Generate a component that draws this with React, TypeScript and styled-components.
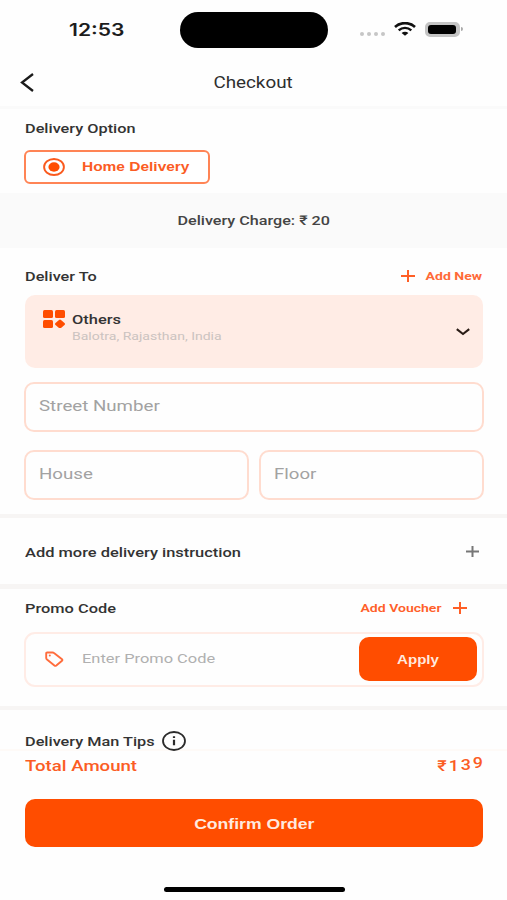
import React from 'react';
import styled, { createGlobalStyle } from 'styled-components';

const ORANGE = '#ff4d00';

const GlobalStyle = createGlobalStyle`
  *, *::before, *::after { box-sizing: border-box; }
  body { margin: 0; background: #fefefe; font-family: Roboto, "Liberation Sans", sans-serif; }
  svg { display: block; flex: none; }
`;

const Screen = styled.main`
  width: 507px;
  height: 900px;
  overflow: hidden;
  display: flex;
  flex-direction: column;
  background: #fefefe;
`;

/* The interface uses an extended cut of the face, so every label is widened. */
const Text = styled.span<{
  $size?: number;
  $weight?: number;
  $color?: string;
  $stretch?: number;
  $origin?: 'left' | 'center' | 'right';
}>`
  display: inline-block;
  white-space: nowrap;
  font-size: ${p => p.$size ?? 13.5}px;
  font-weight: ${p => p.$weight ?? 500};
  line-height: 18px;
  color: ${p => p.$color ?? '#333'};
  transform: scaleX(${p => p.$stretch ?? 1.206});
  transform-origin: ${p => p.$origin ?? 'left'} center;
`;

const Clock = styled(Text)`
  font-family: Inter, sans-serif;
`;

const StatusBar = styled.header`
  height: 60px;
  display: grid;
  grid-template-columns: 180px 148px 1fr;
  align-items: center;
`;
const ClockCell = styled.div`
  padding-left: 69px;
`;
const Island = styled.div`
  height: 36px;
  border-radius: 18px;
  background: #000;
`;
const StatusIcons = styled.div`
  display: flex;
  align-items: center;
  padding: 0 0 2px 32px;
`;
const Dots = styled.div`
  display: flex;
  gap: 3px;
  padding-top: 10px;
  margin-right: 9px;
`;
const Dot = styled.i`
  width: 4px;
  height: 4px;
  border-radius: 50%;
  background: #c6c6c6;
`;
const Battery = styled.div`
  width: 35px;
  height: 15px;
  margin-left: 9px;
  padding: 1px;
  border-radius: 5px;
  border: 2px solid #c4c4c4;
  background: #c4c4c4;
`;
const Charge = styled.div`
  width: 28px;
  height: 9px;
  border-radius: 3px;
  background: #000;
`;
const BatteryTip = styled.i`
  width: 2px;
  height: 4px;
  margin-left: 1px;
  border-radius: 0 2px 2px 0;
  background: #aaa;
`;

const TitleBar = styled.nav`
  height: 49px;
  padding: 0 20px 1px;
  display: grid;
  grid-template-columns: 40px 1fr 40px;
  align-items: center;
  justify-items: center;
  border-bottom: 3px solid #fafafa;
`;
const BackButton = styled.button`
  justify-self: start;
  padding: 0;
  border: 0;
  background: none;
`;

const OptionSection = styled.section`
  height: 84px;
  padding: 10px 24px 0;
  display: flex;
  flex-direction: column;
  gap: 13px;
`;
const OptionTitle = styled.div`
  height: 18px;
  padding-left: 1px;
  display: flex;
`;
const OptionButton = styled.button`
  width: 186px;
  height: 34px;
  padding: 0 0 0 17px;
  display: flex;
  align-items: center;
  gap: 17px;
  border: 2px solid #ff8455;
  border-radius: 6px;
  background: #fff;
`;

const ChargeBand = styled.section`
  height: 55px;
  padding-bottom: 2px;
  display: flex;
  align-items: center;
  justify-content: center;
  background: #fafafa;
`;

const AddressSection = styled.section`
  height: 266px;
  padding: 19px 23px 0 24px;
  display: flex;
  flex-direction: column;
`;
const SectionHead = styled.div`
  height: 18px;
  padding: 0 2px 0 1px;
  display: flex;
  align-items: center;
  justify-content: space-between;
`;
const AddLink = styled.a`
  display: flex;
  align-items: center;
  gap: 20px;
`;
const AddressCard = styled.div`
  height: 73px;
  margin: 10px 1px 14px;
  padding: 15px 13px 0 18px;
  display: grid;
  grid-template-columns: 29px 1fr 14px;
  border-radius: 10px;
  background: #ffece5;
`;
const AddressLines = styled.div`
  display: flex;
  flex-direction: column;
  align-items: flex-start;
`;
const AddressDetail = styled(Text)`
  line-height: 16px;
`;
const Chevron = styled.div`
  padding-top: 18px;
`;
const FieldGrid = styled.div`
  display: grid;
  grid-template-columns: 225px 225px;
  column-gap: 10px;
  row-gap: 18px;
`;
const Field = styled.div<{ $wide?: boolean }>`
  height: 50px;
  padding: 0 0 3px 13px;
  display: flex;
  align-items: center;
  grid-column: ${p => (p.$wide ? 'span 2' : 'auto')};
  border: 2px solid #ffdccf;
  border-radius: 10px;
`;

const Divider = styled.hr<{ $height: number }>`
  flex: none;
  width: 100%;
  height: ${p => p.$height}px;
  margin: 0;
  border: 0;
  background: #f7f5f4;
`;

const InstructionRow = styled.section`
  height: 66px;
  padding: 1px 28px 0 25px;
  display: flex;
  align-items: center;
  justify-content: space-between;
`;

const PromoSection = styled.section`
  height: 117px;
  padding: 10px 23px 0 24px;
`;
const PromoHead = styled(SectionHead)`
  padding-right: 17px;
`;
const VoucherLink = styled(AddLink)`
  gap: 12px;
`;
const PromoBox = styled.div`
  height: 55px;
  margin-top: 15px;
  padding: 0 5px 0 18px;
  display: flex;
  align-items: center;
  border: 2px solid #ffece6;
  border-radius: 11px;
`;
const PromoPlaceholder = styled.div`
  flex: 1;
  padding: 0 0 3px 18px;
  display: flex;
`;
const ApplyButton = styled.button`
  width: 118px;
  height: 44px;
  margin-bottom: 1px;
  padding: 2px 0 0;
  border: 0;
  border-radius: 10px;
  background: ${ORANGE};
`;

const TipsRow = styled.section`
  position: relative;
  z-index: 1;
  height: 39px;
  padding: 22px 25px 0;
  display: flex;
  align-items: center;
  gap: 30px;
`;
const Footer = styled.footer`
  height: 151px;
  padding: 6px 24px 0 25px;
  display: flex;
  flex-direction: column;
  align-items: center;
  border-top: 2px solid #fefaf7;
`;
const TotalRow = styled.div`
  width: 100%;
  height: 18px;
  display: flex;
  justify-content: space-between;
`;
const Price = styled.div`
  display: flex;
  gap: 2px;
  padding-right: 1px;
`;
const Digit = styled(Text)<{ $lift: number }>`
  width: 10px;
  text-align: center;
  margin-top: ${p => -p.$lift}px;
`;
const ConfirmButton = styled.button`
  width: 458px;
  height: 48px;
  margin-top: 24px;
  padding: 2px 0 0;
  border: 0;
  border-radius: 10px;
  background: ${ORANGE};
`;
const HomeIndicator = styled.div`
  width: 181px;
  height: 5px;
  margin-top: 40px;
  border-radius: 3px;
  background: #000;
`;

const Plus = ({ color = '#ff5f26', w = 14, h = 12, stroke = 2 }) => (
  <svg width={w} height={h} viewBox={`0 0 ${w} ${h}`} stroke={color} strokeWidth={stroke}>
    <path d={`M0 ${h / 2}H${w}M${w / 2} 0V${h}`} />
  </svg>
);

const price: [string, number][] = [['1', 0], ['3', 1], ['9', 3]];

export default function App() {
  return (
    <Screen>
      <GlobalStyle />
      <StatusBar>
        <ClockCell>
          <Clock $size={17} $weight={600} $color="#1c1c1c" $stretch={1.24}>12:53</Clock>
        </ClockCell>
        <Island />
        <StatusIcons>
          <Dots><Dot /><Dot /><Dot /><Dot /></Dots>
          <svg width="22" height="14" viewBox="0 0 22 14" fill="none" stroke="#111">
            <path d="M1 5C6.5-.2 15.500-.2 21 5" strokeWidth="2.600" />
            <path d="M4.700 8.300C8.300 5 13.700 5 17.300 8.300" strokeWidth="2.400" />
            <path d="M11 13.700L7.600 11C9.500 9.300 12.500 9.300 14.400 11Z" fill="#111" stroke="none" />
          </svg>
          <Battery><Charge /></Battery>
          <BatteryTip />
        </StatusIcons>
      </StatusBar>

      <TitleBar>
        <BackButton aria-label="Back">
          <svg width="14" height="19" viewBox="0 0 14 19" fill="none" stroke="#1b1b1b" strokeWidth="2.300">
            <path d="M13 1L2 9.500L13 18" />
          </svg>
        </BackButton>
        <Text $size={15.7} $weight={400} $stretch={1.2} $origin="center" $color="#2e2e2e">Checkout</Text>
      </TitleBar>

      <OptionSection>
        <OptionTitle><Text>Delivery Option</Text></OptionTitle>
        <OptionButton>
          <svg width="22" height="18" viewBox="0 0 22 18" fill="none">
            <ellipse cx="11" cy="9" rx="9.900" ry="8" stroke="#fa5a1e" strokeWidth="1.900" />
            <ellipse cx="11" cy="9" rx="5.600" ry="4.700" fill={ORANGE} />
          </svg>
          <Text $size={13.7} $weight={600} $color="#fb5c24" $stretch={1.13}>Home Delivery</Text>
        </OptionButton>
      </OptionSection>

      <ChargeBand>
        <Text $origin="center" $stretch={1.197} $color="#444">Delivery Charge: ₹ 20</Text>
      </ChargeBand>

      <AddressSection>
        <SectionHead>
          <Text>Deliver To</Text>
          <AddLink>
            <Plus />
            <Text $size={11.7} $weight={700} $color="#ff6a38" $stretch={1.2} $origin="right">Add New</Text>
          </AddLink>
        </SectionHead>
        <AddressCard>
          <svg width="22" height="18" viewBox="0 0 22 18" fill={ORANGE}>
            <rect width="10" height="8" rx="1.500" />
            <rect x="12" width="10" height="8" rx="1.500" />
            <rect y="10" width="10" height="8" rx="1.500" />
            <path d="M16 10Q17 9.200 18 10L21.500 13Q22.500 14 21.500 15L18 17.900Q17 18.600 16 17.900L12.500 15Q11.500 14 12.500 13Z" />
          </svg>
          <AddressLines>
            <Text $size={13.7} $stretch={1.2}>Others</Text>
            <AddressDetail $size={11.7} $weight={400} $color="#cbc3c0" $stretch={1.2}>Balotra, Rajasthan, India</AddressDetail>
          </AddressLines>
          <Chevron>
            <svg width="14" height="8" viewBox="0 0 14 8" fill="none" stroke="#2a1c16" strokeWidth="2.100">
              <path d="M.8 1.200L7 6L13.200 1.200" />
            </svg>
          </Chevron>
        </AddressCard>
        <FieldGrid>
          <Field $wide><Text $size={15.5} $weight={400} $color="#a2a2a2">Street Number</Text></Field>
          <Field><Text $size={15.5} $weight={400} $color="#a2a2a2">House</Text></Field>
          <Field><Text $size={15.5} $weight={400} $color="#a2a2a2" $stretch={1.2}>Floor</Text></Field>
        </FieldGrid>
      </AddressSection>

      <Divider $height={4} />
      <InstructionRow>
        <Text $stretch={1.217}>Add more delivery instruction</Text>
        <Plus color="#777" w={13} h={11} />
      </InstructionRow>
      <Divider $height={5} />

      <PromoSection>
        <PromoHead>
          <Text $stretch={1.214}>Promo Code</Text>
          <VoucherLink>
            <Text $size={11.7} $weight={600} $color="#ff5f2a" $stretch={1.2} $origin="right">Add Voucher</Text>
            <Plus />
          </VoucherLink>
        </PromoHead>
        <PromoBox>
          <svg width="20" height="17" viewBox="0 0 20 17" fill="none" stroke="#ff6c3c" strokeWidth="1.900" strokeLinejoin="round">
            <path d="M2.200 2.500Q2.200 1.500 3.200 1.500H8.500Q9.400 1.500 10 2L18 8.200Q18.800 9 18 9.700L12.300 14.500Q11.300 15.200 10.400 14.500L3 8.500Q2.200 7.900 2.200 7Z" />
            <circle cx="5.800" cy="4.500" r="1" fill="#ff6c3c" stroke="none" />
          </svg>
          <PromoPlaceholder>
            <Text $size={13.7} $weight={400} $color="#b0b0b0" $stretch={1.2}>Enter Promo Code</Text>
          </PromoPlaceholder>
          <ApplyButton>
            <Text $size={13.7} $weight={600} $color="#ffe9df" $stretch={1.1} $origin="center">Apply</Text>
          </ApplyButton>
        </PromoBox>
      </PromoSection>

      <Divider $height={4} />
      <TipsRow>
        <Text>Delivery Man Tips</Text>
        <svg width="24" height="20" viewBox="0 0 24 20" fill="none" stroke="#2b2b2b">
          <ellipse cx="12" cy="10" rx="11" ry="9" strokeWidth="1.800" />
          <path d="M12 8.700V14.300M12 5.300V7" strokeWidth="2.200" />
        </svg>
      </TipsRow>
      <Footer>
        <TotalRow>
          <Text $size={15.5} $color="#fb5c24" $stretch={1.2}>Total Amount</Text>
          <Price>
            <Digit $lift={0} $size={15} $color="#fb5c24">₹</Digit>
            {price.map(([d, lift]) => (
              <Digit key={d} $lift={lift} $size={15.5} $color="#fb5c24" $stretch={1.15}>{d}</Digit>
            ))}
          </Price>
        </TotalRow>
        <ConfirmButton>
          <Text $size={15.3} $weight={600} $color="#ffe9df" $stretch={1.15} $origin="center">Confirm Order</Text>
        </ConfirmButton>
        <HomeIndicator />
      </Footer>
    </Screen>
  );
}
